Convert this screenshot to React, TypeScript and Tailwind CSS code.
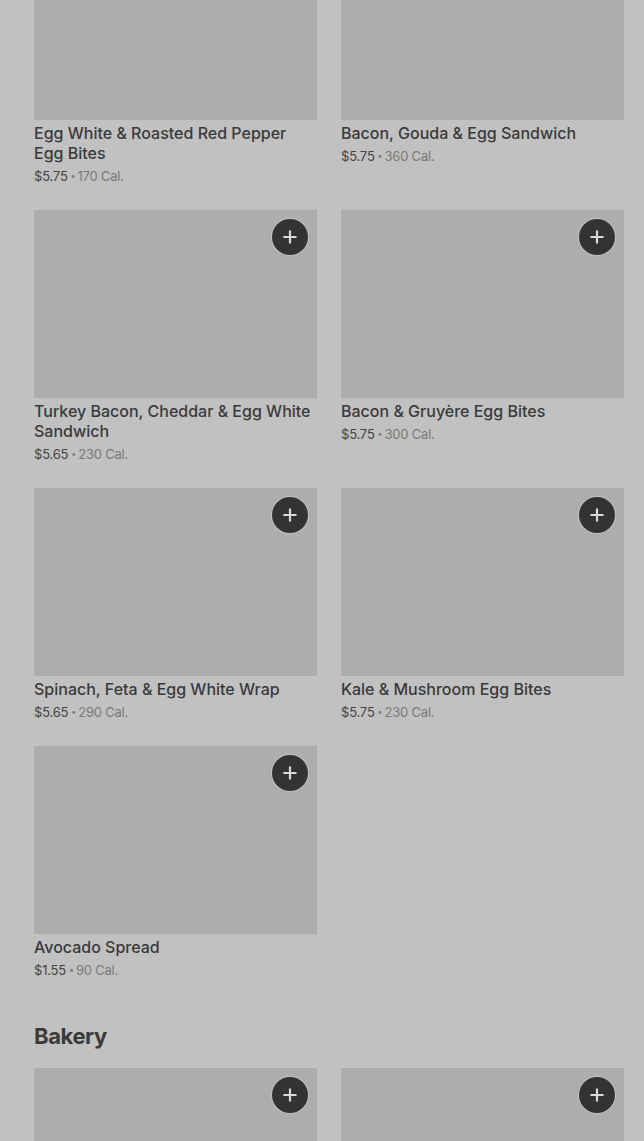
import React from "react";

type Item = { name: string; price: string; cal: string };

const breakfast: Item[] = [
  { name: "Egg White & Roasted Red Pepper Egg Bites", price: "$5.75", cal: "170 Cal." },
  { name: "Bacon, Gouda & Egg Sandwich", price: "$5.75", cal: "360 Cal." },
  { name: "Turkey Bacon, Cheddar & Egg White Sandwich", price: "$5.65", cal: "230 Cal." },
  { name: "Bacon & Gruyère Egg Bites", price: "$5.75", cal: "300 Cal." },
  { name: "Spinach, Feta & Egg White Wrap", price: "$5.65", cal: "290 Cal." },
  { name: "Kale & Mushroom Egg Bites", price: "$5.75", cal: "230 Cal." },
  { name: "Avocado Spread", price: "$1.55", cal: "90 Cal." },
];

function PlusButton() {
  return (
    <button className="absolute right-[9px] top-[9px] flex h-[36px] w-[36px] items-center justify-center rounded-full bg-[#333333] shadow-[0_0_0_1px_rgba(255,255,255,0.25)]">
      <svg width="14" height="14" viewBox="0 0 14 14" fill="none">
        <path d="M7 1.5v11M1.5 7h11" stroke="#d9d9d9" strokeWidth="2.2" strokeLinecap="square" />
      </svg>
    </button>
  );
}

function Card({ item, first }: { item?: Item; first?: boolean }) {
  return (
    <div className="flex flex-col">
      <div className="relative h-[188px] w-full bg-[#adadad]">{!first && <PlusButton />}</div>
      {item && (
        <div className="pt-[3px]">
          <div className="text-[16px] font-medium leading-[20px] text-[#3a3a3a]">{item.name}</div>
          <div className="mt-[3px] flex h-[20px] items-center text-[13px] leading-[20px] tracking-[-0.2px]">
            <span className="text-[#444444]">{item.price}</span>
            <span className="ml-[3px] mr-[2px] text-[9px] leading-[20px] text-[#7a7a7a]">•</span>
            <span className="text-[#7a7a7a]">{item.cal}</span>
          </div>
        </div>
      )}
    </div>
  );
}

export default function App() {
  return (
    <div
      className="h-[1141px] w-[644px] overflow-hidden bg-[#c1c1c1]"
      style={{ fontFamily: "Inter, 'Noto Sans', sans-serif" }}
    >
      <div className="mt-[-68px] pl-[34px] pr-[20px]">
        <div className="grid grid-cols-2 gap-x-[24px] gap-y-[24px]">
          {breakfast.map((it, i) => (
            <Card key={i} item={it} first={i < 2} />
          ))}
        </div>
        <h2 className="mt-[40px] text-[22px] font-bold leading-[32px] tracking-[-0.4px] text-[#3a3a3a]">
          Bakery
        </h2>
        <div className="mt-[16px] grid grid-cols-2 gap-x-[24px]">
          <Card />
          <Card />
        </div>
      </div>
    </div>
  );
}
